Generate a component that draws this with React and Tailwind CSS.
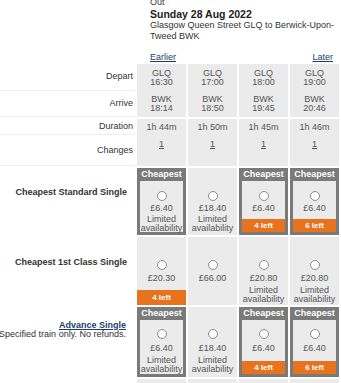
import React from "react";

const journeys = [
  { dep: "16:30", arr: "18:14", dur: "1h 44m" },
  { dep: "17:00", arr: "18:50", dur: "1h 50m" },
  { dep: "18:00", arr: "19:45", dur: "1h 45m" },
  { dep: "19:00", arr: "20:46", dur: "1h 46m" },
];

const stdFares = [
  { cheapest: true, price: "£6.40", lim: true },
  { price: "£18.40", lim: true },
  { cheapest: true, price: "£6.40", left: "4 left" },
  { cheapest: true, price: "£6.40", left: "6 left" },
];

const firstFares = [
  { price: "£20.30", left: "4 left" },
  { price: "£66.00" },
  { price: "£20.80", lim: true },
  { price: "£20.80", lim: true },
];

const S_STD = { h: "h-[67px]", pt: "pt-[10px]", pm: "mt-[2px]", lm: "mt-[2px]", lead: "leading-[8.5px]" };
const S_FIRST = { h: "h-[68px]", pt: "pt-[10px]", pm: "mt-[3px]", lm: "mt-[2.5px]", lead: "leading-[9px]" };
const S_ADV = { h: "h-[70px]", pt: "pt-[9px]", pm: "mt-[4px]", lm: "mt-[3px]", lead: "leading-[9px]" };

function Radio() {
  return <span className="block w-[10px] h-[10px] shrink-0 rounded-full bg-white border border-[#8c8c8c]" />;
}

function FareCell({ f, s }) {
  const content = (
    <div className={`flex flex-col items-center ${s.pt}`}>
      <Radio />
      <div className={`${s.pm} leading-[10px] whitespace-nowrap`}>{f.price}</div>
      {f.lim && (
        <div className={`${s.lm} ${s.lead} text-center whitespace-nowrap`}>
          Limited
          <br />
          availability
        </div>
      )}
    </div>
  );
  if (f.cheapest) {
    return (
      <div className={`w-[49px] ${s.h} bg-[#7a7a7a] flex flex-col px-[3px] pb-[3px]`}>
        <div className="h-[13px] shrink-0 flex items-center justify-center text-white font-bold leading-none">
          Cheapest
        </div>
        <div className="flex-1 bg-[#ebebeb] flex flex-col">
          {content}
          {f.left && (
            <div className="mt-auto h-[13px] bg-[#e8731f] text-white font-bold text-[8px] flex items-center justify-center leading-none">
              {f.left}
            </div>
          )}
        </div>
      </div>
    );
  }
  return (
    <div className={`w-[49px] ${s.h} bg-[#ebebeb] flex flex-col pt-[13px]`}>
      {content}
      {f.left && (
        <div className="mt-auto h-[15px] bg-[#e8731f] text-white font-bold text-[8px] flex items-center justify-center leading-none">
          {f.left}
        </div>
      )}
    </div>
  );
}

export default function App() {
  return (
    <div className="w-[341px] h-[383px] overflow-hidden bg-white text-[#333] text-[9px] font-['Liberation_Sans',Arial,sans-serif]">
      {/* Header */}
      <div className="ml-[150px] -mt-[3px] w-[191px]">
        <div className="leading-[11px]">Out</div>
        <div className="text-[10.5px] font-bold leading-[12px] text-[#222]">Sunday 28 Aug 2022</div>
        <div className="leading-[11px]">Glasgow Queen Street GLQ to Berwick-Upon-Tweed BWK</div>
      </div>
      <div className="mt-[10px] ml-[150px] w-[183px] h-[12px] flex justify-between leading-[11px] text-[#1c3d6e]">
        <span className="underline">Earlier</span>
        <span className="underline">Later</span>
      </div>

      {/* Depart / Arrive */}
      <div className="flex gap-[2px]">
        <div className="w-[135px] shrink-0 flex flex-col">
          <div className="h-[27px] border-b border-[#eeeeee] flex items-center justify-end pr-[2px]">Depart</div>
          <div className="h-[26px] border-b border-[#eeeeee] flex items-center justify-end pr-[2px]">Arrive</div>
        </div>
        {journeys.map((j, i) => (
          <div key={i} className="w-[49px] bg-[#ebebeb] flex flex-col text-[#555] leading-[9px] text-center">
            <div className="h-[27px] flex flex-col items-center justify-center">
              <span>GLQ</span>
              <span>{j.dep}</span>
            </div>
            <div className="h-[26px] flex flex-col items-center justify-center">
              <span>BWK</span>
              <span>{j.arr}</span>
            </div>
          </div>
        ))}
      </div>

      {/* Duration / Changes */}
      <div className="mt-[2px] flex gap-[2px]">
        <div className="w-[135px] shrink-0 flex flex-col">
          <div className="h-[16px] border-b border-[#eeeeee] flex items-center justify-end pr-[2px]">Duration</div>
          <div className="h-[31px] border-b border-[#eeeeee] flex items-center justify-end pr-[2px] pt-[2px]">Changes</div>
        </div>
        {journeys.map((j, i) => (
          <div key={i} className="w-[49px] bg-[#ebebeb] flex flex-col text-[#555] text-center">
            <div className="h-[16px] flex items-center justify-center leading-none">{j.dur}</div>
            <div className="h-[31px] pt-[4px] leading-[10px]">
              <span className="underline">1</span>
            </div>
          </div>
        ))}
      </div>

      {/* Cheapest Standard Single */}
      <div className="mt-[2px] flex gap-[2px]">
        <div className="w-[135px] shrink-0 flex justify-end pr-[8px] pt-[19px] leading-[11px] font-bold whitespace-nowrap">
          Cheapest Standard Single
        </div>
        <div className="flex gap-[2px] text-[#555]">
          {stdFares.map((f, i) => (
            <FareCell key={i} f={f} s={S_STD} />
          ))}
        </div>
      </div>

      {/* Cheapest 1st Class Single */}
      <div className="mt-[2px] flex gap-[2px]">
        <div className="w-[135px] shrink-0 flex justify-end pr-[8px] pt-[20px] leading-[11px] font-bold whitespace-nowrap">
          Cheapest 1st Class Single
        </div>
        <div className="flex gap-[2px] text-[#555]">
          {firstFares.map((f, i) => (
            <FareCell key={i} f={f} s={S_FIRST} />
          ))}
        </div>
      </div>

      {/* Advance Single */}
      <div className="mt-[2px] flex gap-[2px]">
        <div className="w-[135px] shrink-0 flex flex-col items-end pr-[9px] pt-[13.5px] leading-[9px] whitespace-nowrap">
          <span className="font-bold text-[#1c3d6e] underline">Advance Single</span>
          <span>Specified train only. No refunds.</span>
        </div>
        <div className="flex gap-[2px] text-[#555]">
          {stdFares.map((f, i) => (
            <FareCell key={i} f={f} s={S_ADV} />
          ))}
        </div>
      </div>

      {/* Next row (partially visible) */}
      <div className="mt-[2px] flex gap-[2px]">
        <div className="w-[135px] shrink-0 h-[20px]" />
        {journeys.map((j, i) => (
          <div key={i} className="w-[49px] h-[20px] bg-[#ebebeb]" />
        ))}
      </div>
    </div>
  );
}
